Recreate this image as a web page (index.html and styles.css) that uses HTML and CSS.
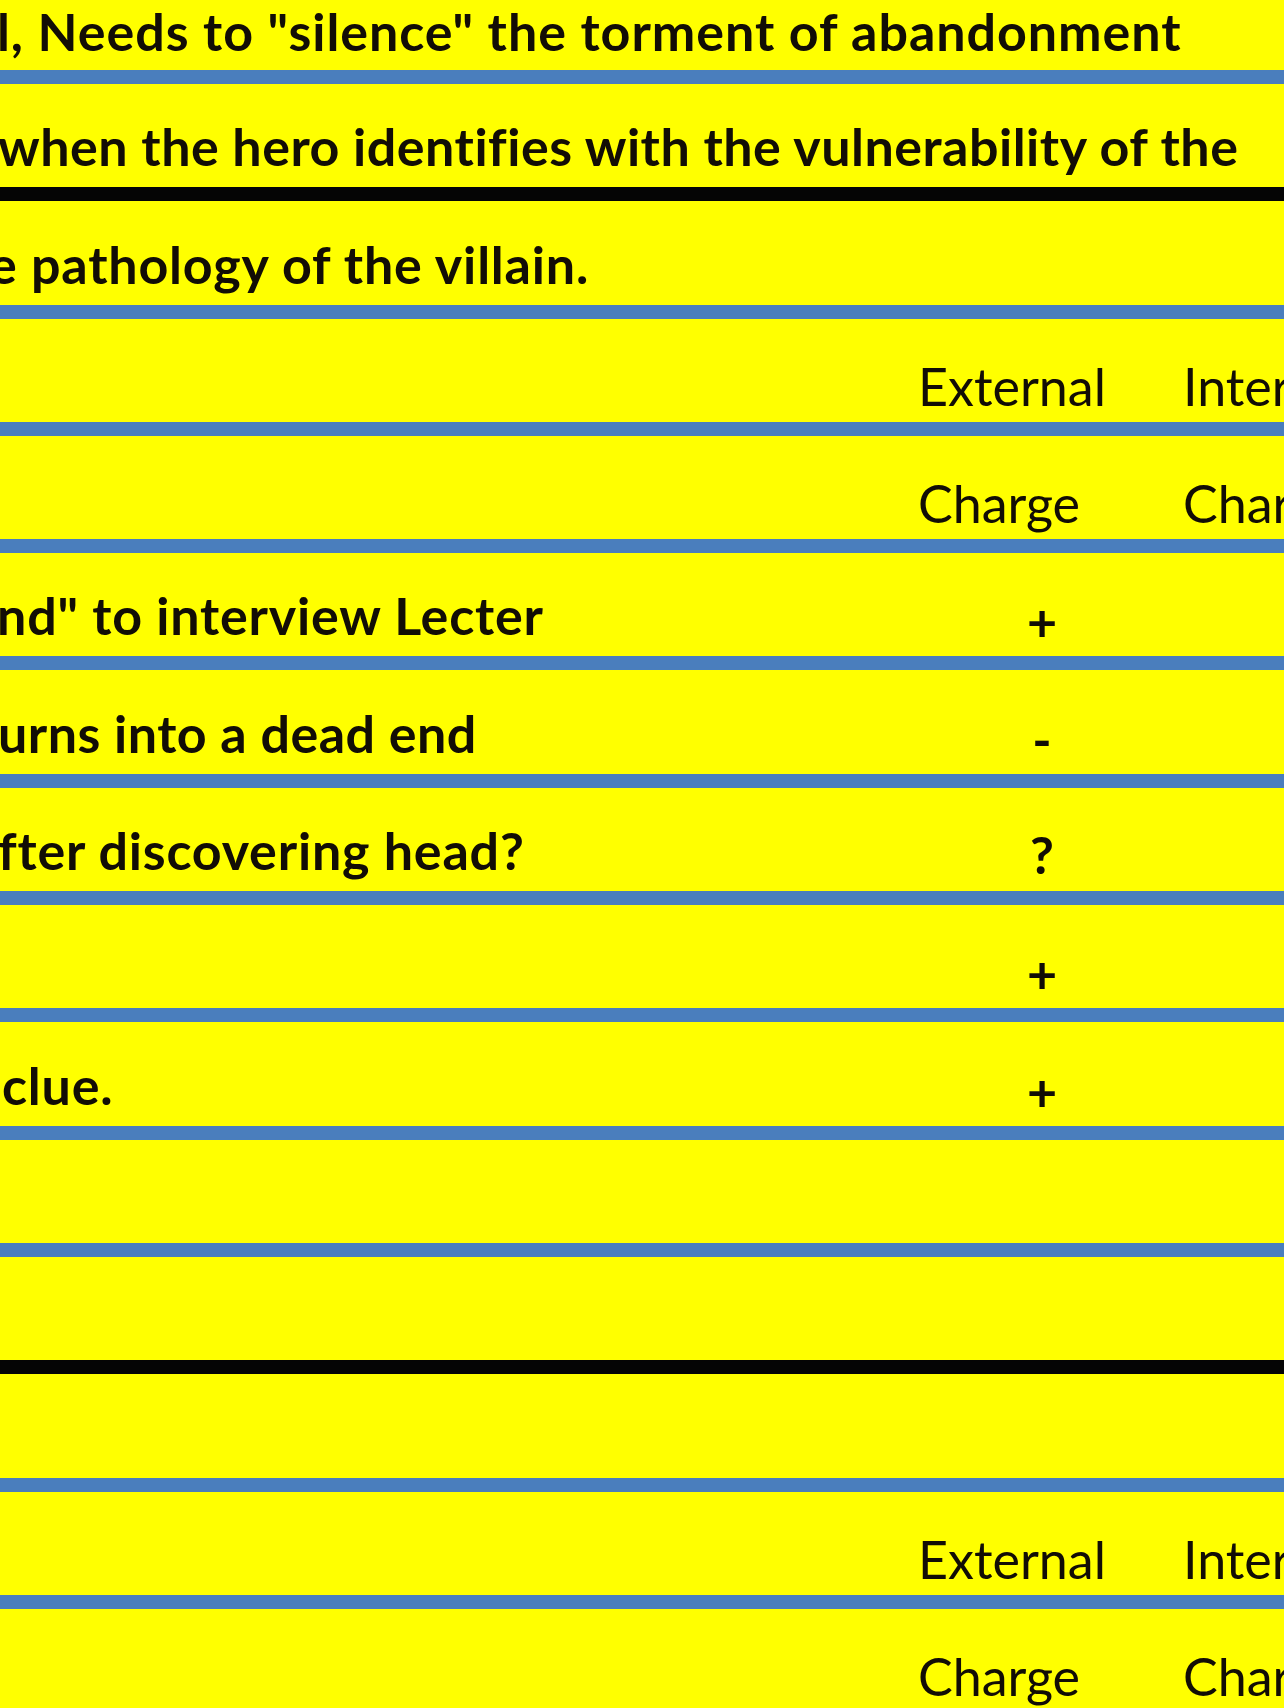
FILE: index.html
```html
<!DOCTYPE html>
<html lang="en">
<head>
<meta charset="utf-8">
<title>Story grid</title>
<link rel="stylesheet" href="styles.css">
</head>
<body>
<div class="sheet">
  <div class="row first">
    <div class="cell text wide loose shift-3">l, Needs to "silence" the torment of abandonment</div>
  </div>
  <div class="row thick">
    <div class="cell text wide tight shift-2">when the hero identifies with the vulnerability of the</div>
  </div>
  <div class="row">
    <div class="cell text wide shift-cut">e pathology of the villain.</div>
  </div>
  <div class="row">
    <div class="cell text"></div>
    <div class="cell label">External</div>
    <div class="cell label third">Internal</div>
  </div>
  <div class="row">
    <div class="cell text"></div>
    <div class="cell label">Charge</div>
    <div class="cell label third">Charge</div>
  </div>
  <div class="row">
    <div class="cell text shift-3">nd" to interview Lecter</div>
    <div class="cell sign">+</div>
    <div class="cell label third"></div>
  </div>
  <div class="row">
    <div class="cell text tight shift-2">urns into a dead end</div>
    <div class="cell sign">-</div>
    <div class="cell label third"></div>
  </div>
  <div class="row">
    <div class="cell text shift-2">fter discovering head?</div>
    <div class="cell sign question">?</div>
    <div class="cell label third"></div>
  </div>
  <div class="row">
    <div class="cell text"></div>
    <div class="cell sign">+</div>
    <div class="cell label third"></div>
  </div>
  <div class="row">
    <div class="cell text shift-in">clue.</div>
    <div class="cell sign">+</div>
    <div class="cell label third"></div>
  </div>
  <div class="row">
    <div class="cell text"></div>
  </div>
  <div class="row thick">
    <div class="cell text"></div>
  </div>
  <div class="row">
    <div class="cell text"></div>
  </div>
  <div class="row">
    <div class="cell text"></div>
    <div class="cell label">External</div>
    <div class="cell label third">Internal</div>
  </div>
  <div class="row">
    <div class="cell text"></div>
    <div class="cell label">Charge</div>
    <div class="cell label third">Charge</div>
  </div>
</div>
</body>
</html>
```
FILE: styles.css
```css
html, body {
  margin: 0;
  padding: 0;
  background: #ffff00;
}
body {
  width: 1284px;
  height: 1708px;
  overflow: hidden;
}
.sheet {
  display: flex;
  flex-direction: column;
  width: 1284px;
  font-family: Lato, "Open Sans", sans-serif;
  color: #120d05;
}
.row {
  box-sizing: border-box;
  flex: 0 0 auto;
  height: 117.3px;
  border-bottom: 14px solid #4a7ebd;
  display: grid;
  grid-template-columns: 918px 248px 1fr;
  align-items: end;
  overflow: hidden;
}
.row.first {
  height: 84px;
}
.row.thick {
  border-bottom-color: #050505;
}
.cell {
  white-space: nowrap;
  font-size: 52px;
  line-height: 62px;
  min-width: 0;
}
.text {
  font-weight: 700;
  letter-spacing: 0.8px;
  padding-bottom: 10px;
  overflow: visible;
}
.text.loose {
  letter-spacing: 0.95px;
}
.text.tight {
  letter-spacing: 0.5px;
}
.wide {
  grid-column: 1 / -1;
}
.label {
  font-weight: 400;
  padding-bottom: 5px;
}
.third {
  padding-left: 17px;
}
.sign {
  font-weight: 700;
  text-align: center;
  padding-bottom: 4px;
}
.sign.question {
  padding-bottom: 6px;
}
.shift-3 { text-indent: -3px; }
.shift-2 { text-indent: -2px; }
.shift-cut { text-indent: -11px; }
.shift-in { text-indent: 2px; }
```
